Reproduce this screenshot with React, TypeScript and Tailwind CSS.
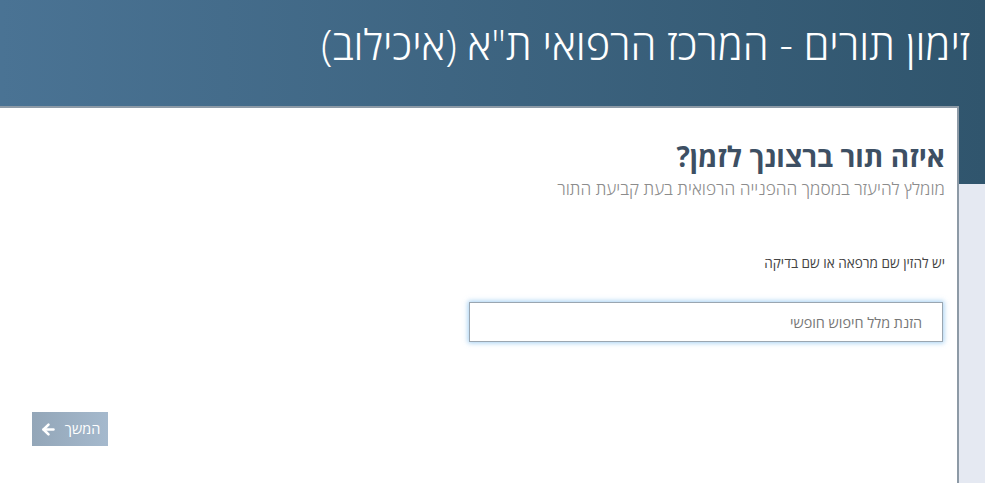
import React from 'react';
import { ArrowLeft } from 'lucide-react';

const font = { fontFamily: '"Open Sans", "Liberation Sans", "DejaVu Sans", sans-serif' };

export default function App() {
  return (
    <div dir="rtl" style={font} className="min-h-[483px] w-[985px] bg-[#e5e9f2] overflow-hidden">
      {/* header band */}
      <div className="h-[184px] bg-gradient-to-l from-[#30556d] to-[#4a7394] pr-[15px] pt-[19px]">
        <h1 className="text-[41.7px] font-light leading-[1.2] text-white whitespace-nowrap">
          זימון תורים - המרכז הרפואי ת"א (איכילוב)
        </h1>
      </div>

      {/* card */}
      <div className="-mt-[78px] mr-[26px] h-[377px] bg-white border-t-2 border-r-2 border-[#8d9aa6] pr-[12px] pl-[32px] pt-[32px]">
        <h2 className="text-[28px] font-bold leading-[1.2] text-[#3d4f63]">איזה תור ברצונך לזמן?</h2>
        <p className="mt-[4px] text-[17.3px] font-light leading-[1.3] text-[#8c8c8c]">
          מומלץ להיעזר במסמך ההפנייה הרפואית בעת קביעת התור
        </p>

        <label className="block mt-[54px] text-[13.6px] leading-[18px] text-[#444]">
          יש להזין שם מרפאה או שם בדיקה
        </label>

        <div className="mt-[30px] flex">
          <input
            type="text"
            autoFocus
            placeholder="הזנת מלל חיפוש חופשי"
            className="w-[474px] h-[40px] mr-[2px] border border-[#9aa6b1] bg-white px-[20px] text-[14.4px] text-[#555] caret-black placeholder:text-[#777] shadow-[0_0_5px_1px_rgba(102,175,233,0.6)] outline-none"
          />
        </div>

        <div className="mt-[70px] flex justify-end">
          <button className="flex items-center gap-[8px] h-[34px] w-[76px] justify-center bg-gradient-to-l from-[#a5b9cd] to-[#93a6b8] text-white text-[14.5px]">
            <span>המשך</span>
            <ArrowLeft size={17} strokeWidth={3.6} />
          </button>
        </div>
      </div>
    </div>
  );
}
